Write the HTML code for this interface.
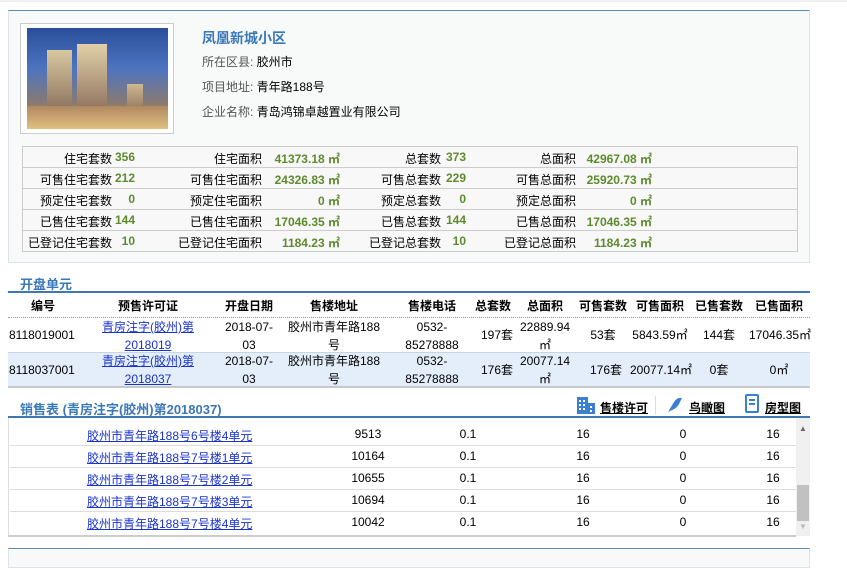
<!DOCTYPE html>
<html><head><meta charset="utf-8"><style>
*{margin:0;padding:0;box-sizing:border-box}
body{width:847px;height:563px;overflow:hidden;background:#fff;font-family:"Liberation Sans","Noto Sans CJK SC",sans-serif;font-size:12px;color:#000;position:relative}
.a{position:absolute;white-space:nowrap}
.box{position:absolute;left:8px;top:10px;width:802px;height:253px;background:#f8f9f9;border:1px solid #dde3e8;border-top:1px solid #5b8bb3}
.g{color:#5e8a2e;font-weight:bold}
.lk{color:#1a33cc;text-decoration:underline}
.c{text-align:center}
.r{text-align:right}
</style></head><body>
<div class="a" style="left:0;top:0;width:847px;height:2px;background:#f0f0f0"></div>
<div class="box"></div>
<div class="a" style="left:20px;top:23px;width:154px;height:111px;border:1px solid #ccc;background:#fff"></div>
<div class="a" style="left:27px;top:28px;width:141px;height:101px;background:linear-gradient(180deg,#2a4f9a 0%,#4d74c0 40%,#8a7a70 75%,#c09060 100%)">
<div class="a" style="left:20px;top:22px;width:25px;height:74px;background:linear-gradient(#d8c8a0,#7a6050)"></div>
<div class="a" style="left:50px;top:16px;width:30px;height:80px;background:linear-gradient(#e0d0a8,#806050)"></div>
<div class="a" style="left:100px;top:56px;width:16px;height:40px;background:linear-gradient(#d0b890,#705848)"></div>
<div class="a" style="left:0;top:78px;width:141px;height:23px;background:linear-gradient(#b08860,#e0c080)"></div>
</div>
<div class="a" style="left:202px;top:28px;font-size:14px;font-weight:bold;color:#3a78b8">凤凰新城小区</div>
<div class="a" style="left:202px;top:53px;color:#555">所在区县: <span style="color:#000">胶州市</span></div>
<div class="a" style="left:202px;top:78px;color:#555">项目地址: <span style="color:#000">青年路188号</span></div>
<div class="a" style="left:202px;top:103px;color:#555">企业名称: <span style="color:#000">青岛鸿锦卓越置业有限公司</span></div>

<div class="a" style="left:22px;top:146px;width:776px;height:106px;border:1px solid #ccc;background:#f8f8f8"></div>
<div class="a" style="left:23px;top:167px;width:774px;height:1px;background:#ccc"></div>
<div class="a" style="left:23px;top:188px;width:774px;height:1px;background:#ccc"></div>
<div class="a" style="left:23px;top:209px;width:774px;height:1px;background:#ccc"></div>
<div class="a" style="left:23px;top:230px;width:774px;height:1px;background:#ccc"></div>

<div class="a r" style="left:20px;top:150px;width:92px">住宅套数</div>
<div class="a r" style="left:20px;top:171px;width:92px">可售住宅套数</div>
<div class="a r" style="left:20px;top:192px;width:92px">预定住宅套数</div>
<div class="a r" style="left:20px;top:213px;width:92px">已售住宅套数</div>
<div class="a r" style="left:20px;top:234px;width:92px">已登记住宅套数</div>
<div class="a g r" style="left:112px;top:150px;width:23px">356</div>
<div class="a g r" style="left:112px;top:171px;width:23px">212</div>
<div class="a g r" style="left:112px;top:192px;width:23px">0</div>
<div class="a g r" style="left:112px;top:213px;width:23px">144</div>
<div class="a g r" style="left:112px;top:234px;width:23px">10</div>

<div class="a r" style="left:160px;top:150px;width:102px">住宅面积</div>
<div class="a r" style="left:160px;top:171px;width:102px">可售住宅面积</div>
<div class="a r" style="left:160px;top:192px;width:102px">预定住宅面积</div>
<div class="a r" style="left:160px;top:213px;width:102px">已售住宅面积</div>
<div class="a r" style="left:160px;top:234px;width:102px">已登记住宅面积</div>
<div class="a g r" style="left:262px;top:150px;width:78px">41373.18 ㎡</div>
<div class="a g r" style="left:262px;top:171px;width:78px">24326.83 ㎡</div>
<div class="a g r" style="left:262px;top:192px;width:78px">0 ㎡</div>
<div class="a g r" style="left:262px;top:213px;width:78px">17046.35 ㎡</div>
<div class="a g r" style="left:262px;top:234px;width:78px">1184.23 ㎡</div>

<div class="a r" style="left:340px;top:150px;width:101px">总套数</div>
<div class="a r" style="left:340px;top:171px;width:101px">可售总套数</div>
<div class="a r" style="left:340px;top:192px;width:101px">预定总套数</div>
<div class="a r" style="left:340px;top:213px;width:101px">已售总套数</div>
<div class="a r" style="left:340px;top:234px;width:101px">已登记总套数</div>
<div class="a g r" style="left:441px;top:150px;width:25px">373</div>
<div class="a g r" style="left:441px;top:171px;width:25px">229</div>
<div class="a g r" style="left:441px;top:192px;width:25px">0</div>
<div class="a g r" style="left:441px;top:213px;width:25px">144</div>
<div class="a g r" style="left:441px;top:234px;width:25px">10</div>

<div class="a r" style="left:480px;top:150px;width:96px">总面积</div>
<div class="a r" style="left:480px;top:171px;width:96px">可售总面积</div>
<div class="a r" style="left:480px;top:192px;width:96px">预定总面积</div>
<div class="a r" style="left:480px;top:213px;width:96px">已售总面积</div>
<div class="a r" style="left:480px;top:234px;width:96px">已登记总面积</div>
<div class="a g r" style="left:576px;top:150px;width:76px">42967.08 ㎡</div>
<div class="a g r" style="left:576px;top:171px;width:76px">25920.73 ㎡</div>
<div class="a g r" style="left:576px;top:192px;width:76px">0 ㎡</div>
<div class="a g r" style="left:576px;top:213px;width:76px">17046.35 ㎡</div>
<div class="a g r" style="left:576px;top:234px;width:76px">1184.23 ㎡</div>

<div class="a" style="left:20px;top:274px;font-size:13px;font-weight:bold;color:#3a78b8">开盘单元</div>
<div class="a" style="left:8px;top:291px;width:802px;height:2px;background:#3f78b0"></div>
<div class="a" style="left:8px;top:317px;width:802px;border-top:1px dotted #999"></div>
<div class="a" style="left:8px;top:352px;width:802px;height:35px;background:#e3eefa;border-top:1px solid #c8d4e0"></div>
<div class="a" style="left:8px;top:386px;width:802px;height:2px;background:#c8c8c8"></div>
<div style="font-weight:bold">
<div class="a c" style="left:13px;top:297px;width:60px">编号</div>
<div class="a c" style="left:98px;top:297px;width:100px">预售许可证</div>
<div class="a c" style="left:214px;top:297px;width:70px">开盘日期</div>
<div class="a c" style="left:290px;top:297px;width:88px">售楼地址</div>
<div class="a c" style="left:397px;top:297px;width:70px">售楼电话</div>
<div class="a c" style="left:470px;top:297px;width:46px">总套数</div>
<div class="a c" style="left:520px;top:297px;width:50px">总面积</div>
<div class="a c" style="left:573px;top:297px;width:60px">可售套数</div>
<div class="a c" style="left:630px;top:297px;width:60px">可售面积</div>
<div class="a c" style="left:689px;top:297px;width:60px">已售套数</div>
<div class="a c" style="left:749px;top:297px;width:60px">已售面积</div>
</div>
<div style="line-height:18px">
<div class="a" style="left:9px;top:326px">8118019001</div>
<div class="a c lk" style="left:98px;top:318px;width:100px">青房注字(胶州)第<br>2018019</div>
<div class="a c" style="left:214px;top:318px;width:70px">2018-07-<br>03</div>
<div class="a c" style="left:286px;top:318px;width:96px">胶州市青年路188<br>号</div>
<div class="a c" style="left:397px;top:318px;width:70px">0532-<br>85278888</div>
<div class="a c" style="left:474px;top:326px;width:46px">197套</div>
<div class="a c" style="left:520px;top:318px;width:50px">22889.94<br>㎡</div>
<div class="a c" style="left:573px;top:326px;width:60px">53套</div>
<div class="a c" style="left:630px;top:326px;width:60px">5843.59㎡</div>
<div class="a c" style="left:689px;top:326px;width:60px">144套</div>
<div class="a c" style="left:749px;top:326px;width:60px">17046.35㎡</div>

<div class="a" style="left:9px;top:361px">8118037001</div>
<div class="a c lk" style="left:98px;top:352px;width:100px">青房注字(胶州)第<br>2018037</div>
<div class="a c" style="left:214px;top:352px;width:70px">2018-07-<br>03</div>
<div class="a c" style="left:286px;top:352px;width:96px">胶州市青年路188<br>号</div>
<div class="a c" style="left:397px;top:352px;width:70px">0532-<br>85278888</div>
<div class="a c" style="left:474px;top:361px;width:46px">176套</div>
<div class="a c" style="left:520px;top:352px;width:50px">20077.14<br>㎡</div>
<div class="a c" style="left:576px;top:361px;width:60px">176套</div>
<div class="a c" style="left:630px;top:361px;width:60px">20077.14㎡</div>
<div class="a c" style="left:689px;top:361px;width:60px">0套</div>
<div class="a c" style="left:749px;top:361px;width:60px">0㎡</div>
</div>

<div class="a" style="left:20px;top:399px;font-size:13px;font-weight:bold;color:#3a78b8">销售表 (青房注字(胶州)第2018037)</div>
<svg class="a" style="left:576px;top:395px" width="20" height="20"><rect x="1" y="2" width="11" height="17" fill="#3a7fd0"/><rect x="12" y="8" width="7" height="11" fill="#3a7fd0"/><g fill="#fff"><rect x="3" y="5" width="2" height="2"/><rect x="7" y="5" width="2" height="2"/><rect x="3" y="9" width="2" height="2"/><rect x="7" y="9" width="2" height="2"/><rect x="3" y="13" width="2" height="2"/><rect x="7" y="13" width="2" height="2"/><rect x="14" y="11" width="2" height="2"/><rect x="14" y="15" width="2" height="2"/></g></svg>
<div class="a" style="left:600px;top:399px;font-weight:bold;text-decoration:underline">售楼许可</div>
<div class="a" style="left:655px;top:396px;width:1px;height:18px;background:#ddd"></div>
<svg class="a" style="left:666px;top:396px" width="18" height="18"><path d="M2 16 L8 6 Q11 1 16 2 L14 6 Q12 12 4 15 Z" fill="#3a7fd0"/></svg>
<div class="a" style="left:689px;top:399px;font-weight:bold;text-decoration:underline">鸟瞰图</div>
<svg class="a" style="left:744px;top:394px" width="16" height="20"><rect x="2" y="1" width="12" height="17" rx="1" fill="none" stroke="#3a7fd0" stroke-width="2"/><rect x="5" y="5" width="6" height="2" fill="#3a7fd0"/><rect x="5" y="9" width="6" height="2" fill="#3a7fd0"/></svg>
<div class="a" style="left:765px;top:399px;font-weight:bold;text-decoration:underline">房型图</div>
<div class="a" style="left:8px;top:416px;width:802px;height:2px;background:#3f78b0"></div>
<div class="a" style="left:8px;top:418px;width:1px;height:118px;background:#ddd"></div>
<div class="a" style="left:8px;top:535px;width:788px;height:2px;background:#ccc"></div>
<div class="a" style="left:796px;top:418px;width:14px;height:118px;background:#f0f0f0"></div>
<div class="a" style="left:797px;top:485px;width:12px;height:36px;background:#c1c1c1"></div>
<div class="a" style="left:799px;top:424px;font-size:8px;color:#666">▲</div>
<div class="a" style="left:799px;top:522px;font-size:8px;color:#bbb">▼</div>
<div class="a" style="left:10px;top:445px;width:786px;height:1px;background:#ddd"></div>
<div class="a" style="left:10px;top:467px;width:786px;height:1px;background:#ddd"></div>
<div class="a" style="left:10px;top:489px;width:786px;height:1px;background:#ddd"></div>
<div class="a" style="left:10px;top:511px;width:786px;height:1px;background:#ddd"></div>

<div class="a lk" style="left:87px;top:427px">胶州市青年路188号6号楼4单元</div>
<div class="a lk" style="left:87px;top:449px">胶州市青年路188号7号楼1单元</div>
<div class="a lk" style="left:87px;top:471px">胶州市青年路188号7号楼2单元</div>
<div class="a lk" style="left:87px;top:493px">胶州市青年路188号7号楼3单元</div>
<div class="a lk" style="left:87px;top:515px">胶州市青年路188号7号楼4单元</div>
<div class="a c" style="left:338px;top:427px;width:60px">9513</div>
<div class="a c" style="left:338px;top:449px;width:60px">10164</div>
<div class="a c" style="left:338px;top:471px;width:60px">10655</div>
<div class="a c" style="left:338px;top:493px;width:60px">10694</div>
<div class="a c" style="left:338px;top:515px;width:60px">10042</div>
<div class="a c" style="left:448px;top:427px;width:40px">0.1</div>
<div class="a c" style="left:448px;top:449px;width:40px">0.1</div>
<div class="a c" style="left:448px;top:471px;width:40px">0.1</div>
<div class="a c" style="left:448px;top:493px;width:40px">0.1</div>
<div class="a c" style="left:448px;top:515px;width:40px">0.1</div>
<div class="a c" style="left:563px;top:427px;width:40px">16</div><div class="a c" style="left:563px;top:449px;width:40px">16</div><div class="a c" style="left:563px;top:471px;width:40px">16</div><div class="a c" style="left:563px;top:493px;width:40px">16</div><div class="a c" style="left:563px;top:515px;width:40px">16</div>
<div class="a c" style="left:663px;top:427px;width:40px">0</div><div class="a c" style="left:663px;top:449px;width:40px">0</div><div class="a c" style="left:663px;top:471px;width:40px">0</div><div class="a c" style="left:663px;top:493px;width:40px">0</div><div class="a c" style="left:663px;top:515px;width:40px">0</div>
<div class="a c" style="left:753px;top:427px;width:40px">16</div><div class="a c" style="left:753px;top:449px;width:40px">16</div><div class="a c" style="left:753px;top:471px;width:40px">16</div><div class="a c" style="left:753px;top:493px;width:40px">16</div><div class="a c" style="left:753px;top:515px;width:40px">16</div>

<div class="a" style="left:8px;top:548px;width:802px;height:20px;background:#f8f9f9;border:1px solid #dde3e8;border-top:1px solid #5b8bb3"></div>
</body></html>
